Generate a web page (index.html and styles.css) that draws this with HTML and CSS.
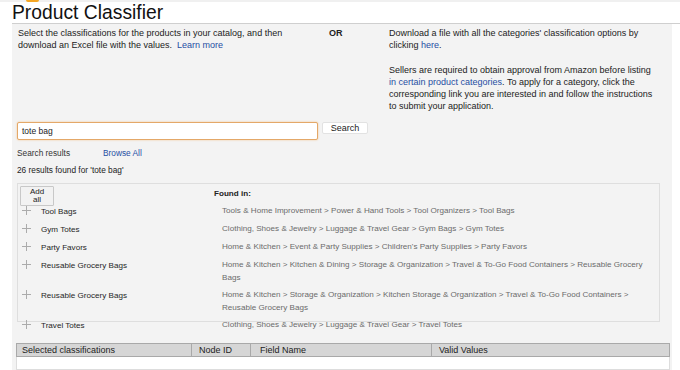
FILE: index.html
```html
<!DOCTYPE html>
<html>
<head>
<meta charset="utf-8">
<link rel="stylesheet" href="styles.css">
</head>
<body>
<div class="topstrip"><span class="logo-bit"></span></div>
<div class="wrap">
  <h1 class="title">Product Classifier</h1>
  <div class="panel">
    <div class="intro">
      <div class="intro-left">Select the classifications for the products in your catalog, and then<br>download an Excel file with the values.&nbsp; <a href="#">Learn more</a></div>
      <div class="intro-or">OR</div>
      <div class="intro-right">
        <p class="para">Download a file with all the categories' classification options by<br>clicking <a href="#">here</a>.</p>
        <p class="para">Sellers are required to obtain approval from Amazon before listing<br><a href="#">in certain product categories</a>. To apply for a category, click the<br>corresponding link you are interested in and follow the instructions<br>to submit your application.</p>
      </div>
    </div>
    <div class="search-row">
      <div class="search-input">tote bag</div>
      <button class="search-btn">Search</button>
    </div>
    <div class="results-head"><span class="results-label">Search results</span><a href="#" class="browse">Browse All</a></div>
    <div class="results-count">26 results found for 'tote bag'</div>
    <div class="results-box">
      <div class="rb-head">
        <button class="add-all">Add<br>all</button>
        <span class="found-in">Found in:</span>
      </div>
      <div class="rb-row">
        <span class="plus"><svg width="9" height="9" viewBox="0 0 9 9"><path d="M4.5 0V9M0 4.5H9" stroke="#ababab" stroke-width="1"/></svg></span>
        <span class="name">Tool Bags</span>
        <span class="path">Tools &amp; Home Improvement &gt; Power &amp; Hand Tools &gt; Tool Organizers &gt; Tool Bags</span>
      </div>
      <div class="rb-row">
        <span class="plus"><svg width="9" height="9" viewBox="0 0 9 9"><path d="M4.5 0V9M0 4.5H9" stroke="#ababab" stroke-width="1"/></svg></span>
        <span class="name">Gym Totes</span>
        <span class="path">Clothing, Shoes &amp; Jewelry &gt; Luggage &amp; Travel Gear &gt; Gym Bags &gt; Gym Totes</span>
      </div>
      <div class="rb-row">
        <span class="plus"><svg width="9" height="9" viewBox="0 0 9 9"><path d="M4.5 0V9M0 4.5H9" stroke="#ababab" stroke-width="1"/></svg></span>
        <span class="name">Party Favors</span>
        <span class="path">Home &amp; Kitchen &gt; Event &amp; Party Supplies &gt; Children's Party Supplies &gt; Party Favors</span>
      </div>
      <div class="rb-row">
        <span class="plus"><svg width="9" height="9" viewBox="0 0 9 9"><path d="M4.5 0V9M0 4.5H9" stroke="#ababab" stroke-width="1"/></svg></span>
        <span class="name">Reusable Grocery Bags</span>
        <span class="path">Home &amp; Kitchen &gt; Kitchen &amp; Dining &gt; Storage &amp; Organization &gt; Travel &amp; To-Go Food Containers &gt; Reusable Grocery<br>Bags</span>
      </div>
      <div class="rb-row">
        <span class="plus"><svg width="9" height="9" viewBox="0 0 9 9"><path d="M4.5 0V9M0 4.5H9" stroke="#ababab" stroke-width="1"/></svg></span>
        <span class="name">Reusable Grocery Bags</span>
        <span class="path">Home &amp; Kitchen &gt; Storage &amp; Organization &gt; Kitchen Storage &amp; Organization &gt; Travel &amp; To-Go Food Containers &gt;<br>Reusable Grocery Bags</span>
      </div>
      <div class="rb-row">
        <span class="plus"><svg width="9" height="9" viewBox="0 0 9 9"><path d="M4.5 0V9M0 4.5H9" stroke="#ababab" stroke-width="1"/></svg></span>
        <span class="name">Travel Totes</span>
        <span class="path">Clothing, Shoes &amp; Jewelry &gt; Luggage &amp; Travel Gear &gt; Travel Totes</span>
      </div>
    </div>
    <table class="sel-table">
      <thead>
        <tr><th class="c1">Selected classifications</th><th class="c2">Node ID</th><th class="c3">Field Name</th><th class="c4">Valid Values</th></tr>
      </thead>
      <tbody>
        <tr><td colspan="4"></td></tr>
      </tbody>
    </table>
  </div>
</div>
</body>
</html>
```

FILE: styles.css
```css
html, body {
  margin: 0;
  padding: 0;
  background: #ffffff;
  font-family: "Liberation Sans", Arial, Helvetica, sans-serif;
  color: #222222;
  overflow: hidden;
}

a {
  color: #1f4ea3;
  text-decoration: none;
}

.topstrip {
  height: 2px;
  background: #f0f0f0;
}

.logo-bit {
  display: block;
  width: 13px;
  height: 2px;
  margin-left: 26px;
  background: #f5a623;
  border-radius: 0 0 6px 6px;
}

.wrap {
  margin-left: 12px;
}

.title {
  margin: 0;
  font-size: 19.3px;
  font-weight: normal;
  line-height: 21px;
  height: 21px;
  color: #111111;
  border-bottom: 1px solid #cfcfcf;
}

.panel {
  background: #f3f3f3;
  margin-right: 8px;
  padding: 3px 0 0 6px;
  height: 346px;
  box-sizing: border-box;
}

.intro {
  display: grid;
  grid-template-columns: 311px 60px 1fr;
  font-size: 9px;
  line-height: 12px;
  color: #222;
  white-space: nowrap;
}

.intro-or {
  font-weight: bold;
}

.para {
  margin: 0 0 13px 0;
}

.para:last-child {
  margin-bottom: 0;
}

.search-row {
  display: flex;
  align-items: flex-start;
  margin-top: 10px;
  margin-left: -1px;
}

.search-input {
  width: 301px;
  height: 18px;
  box-sizing: border-box;
  background: #fff;
  border: 1px solid #e4a868;
  border-radius: 2px;
  box-shadow: 0 0 2px #f2c088;
  font-size: 8.5px;
  line-height: 16px;
  padding-left: 4px;
  color: #222;
}

.search-btn {
  margin-left: 4px;
  width: 46px;
  height: 12px;
  padding: 0;
  background: #ffffff;
  border: 1px solid #e2e2e2;
  border-radius: 2px;
  font-family: "Liberation Sans", Arial, sans-serif;
  font-size: 9px;
  line-height: 10px;
  color: #222;
}

.results-head {
  margin-top: 7px;
  margin-left: -1px;
  font-size: 8.3px;
  line-height: 12px;
  display: flex;
}

.results-label {
  width: 86px;
  color: #333;
}

.results-count {
  margin-top: 5px;
  margin-left: -1px;
  font-size: 8.3px;
  line-height: 12px;
  color: #222;
}

.results-box {
  margin-top: 7px;
  margin-left: -1px;
  width: 643px;
  height: 139px;
  box-sizing: border-box;
  border: 1px solid #dedede;
  font-size: 8.1px;
  color: #333;
}

.rb-head {
  display: flex;
  align-items: flex-start;
  height: 19px;
  padding-left: 2px;
}

.add-all {
  margin-top: 2px;
  width: 34px;
  height: 20px;
  padding: 0;
  background: #f2f2f2;
  border: 1px solid #c8c8c8;
  border-radius: 1px;
  font-family: "Liberation Sans", Arial, sans-serif;
  font-size: 8px;
  line-height: 8.5px;
  color: #222;
  position: relative;
  z-index: 1;
}

.found-in {
  margin-left: 160px;
  margin-top: 4px;
  font-weight: bold;
  line-height: 12px;
  color: #222;
}

.rb-row {
  display: flex;
  align-items: flex-start;
  padding: 2px 0 3px 0;
  white-space: nowrap;
}

.plus {
  width: 9px;
  height: 9px;
  margin-left: 4px;
  margin-top: 1px;
  margin-right: 10px;
  display: block;
}

.plus svg {
  display: block;
}

.name {
  width: 181px;
  line-height: 13px;
  color: #262626;
}

.path {
  line-height: 12.5px;
  color: #6b6b6b;
}

.sel-table {
  margin-top: 21px;
  margin-left: -2px;
  width: 654px;
  border-collapse: collapse;
  font-size: 9px;
  table-layout: fixed;
}

.sel-table th {
  background: #d6d6d6;
  border: 1px solid #a9a9a9;
  height: 12px;
  padding: 0 0 0 5px;
  text-align: left;
  font-weight: normal;
  line-height: 11px;
  color: #222;
}

.sel-table td {
  background: #ffffff;
  border: 1px solid #dddddd;
  border-top: none;
  height: 12px;
  padding: 0;
}

.sel-table .c1 { width: 169px; }
.sel-table .c2 { width: 51px; padding-left: 7px; }
.sel-table .c3 { width: 171px; padding-left: 9px; }
.sel-table .c4 { padding-left: 7px; }
```
